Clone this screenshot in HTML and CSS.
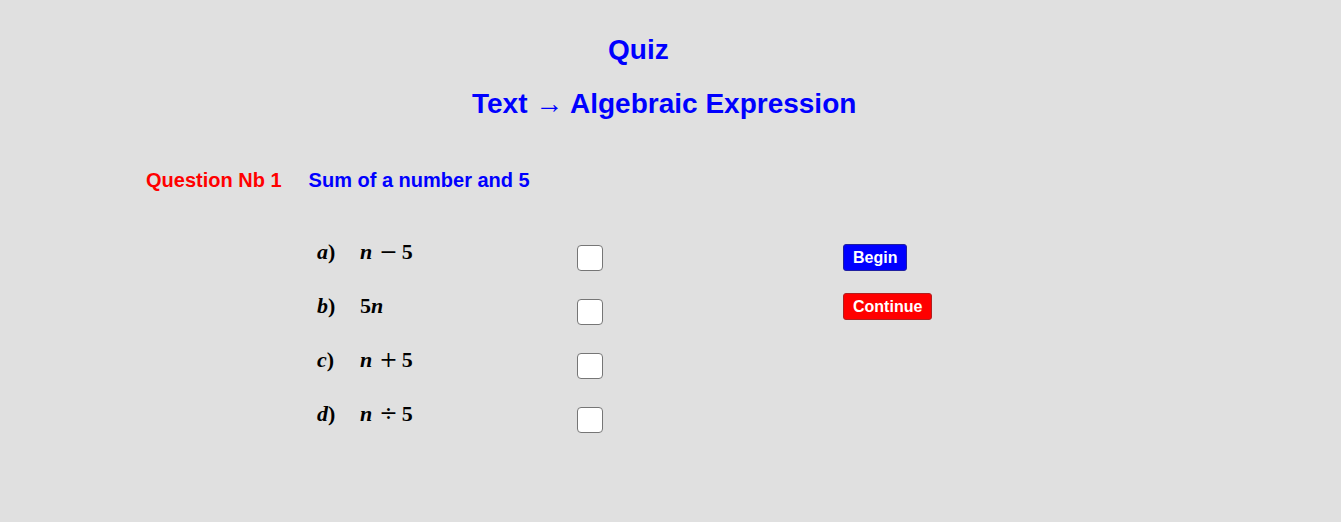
FILE: index.html
```html
<!DOCTYPE html>
<html lang="en">
<head>
    <meta charset="UTF-8">
    <meta name="viewport" content="width=device-width, initial-scale=1.0">
    <title>Quiz</title>
    <link rel="stylesheet" href="styles.css">
</head>
<body>
    <div class="applet">
        <div class="title1">Quiz</div>
        <div class="title2">Text &rarr; Algebraic Expression</div>
        <div class="question">
            <span class="qnb">Question Nb 1</span>
            <span class="qtext">Sum of a number and 5</span>
        </div>
        <div class="quiz">
            <ul class="options">
                <li>
                    <span class="math"><span class="lbl"><i>a</i>)</span><i>n</i><span class="op">&minus;</span>5</span>
                    <span class="box"></span>
                </li>
                <li>
                    <span class="math"><span class="lbl"><i>b</i>)</span>5<i>n</i></span>
                    <span class="box"></span>
                </li>
                <li>
                    <span class="math"><span class="lbl"><i>c</i>)</span><i>n</i><span class="op">+</span>5</span>
                    <span class="box"></span>
                </li>
                <li>
                    <span class="math"><span class="lbl"><i>d</i>)</span><i>n</i><span class="op">&divide;</span>5</span>
                    <span class="box"></span>
                </li>
            </ul>
            <div class="buttons">
                <div class="btn begin">Begin</div>
                <div class="btn continue">Continue</div>
            </div>
        </div>
    </div>
</body>
</html>
```

FILE: styles.css
```css
*{
    margin: 0px;
    padding: 0px;
    list-style: none;
}
body{
    background-color: #e0e0e0;
    font-family: "Liberation Sans", Arial, sans-serif;
    font-weight: bold;
    overflow: hidden;
}
.applet{
    height: 522px;
}
.title1{
    padding-top: 34px;
    margin-left: 608px;
    font-size: 28px;
    line-height: 32px;
    color: #0000ff;
}
.title2{
    margin-top: 22px;
    margin-left: 472px;
    font-size: 28px;
    line-height: 32px;
    color: #0000ff;
}
.question{
    display: flex;
    gap: 27px;
    margin-top: 49px;
    padding-left: 146px;
    font-size: 20px;
    line-height: 23px;
}
.qnb{
    color: #ff0000;
}
.qtext{
    color: #0000ff;
}
.quiz{
    display: flex;
    margin-top: 39px;
    padding-left: 317px;
}
.options li{
    display: flex;
    align-items: center;
    height: 54px;
}
.math{
    width: 260px;
    margin-bottom: 14px;
    font-family: "Liberation Serif", "Times New Roman", serif;
    font-size: 22px;
    line-height: 25px;
    color: #000;
}
.math i{
    font-style: italic;
}
.lbl{
    display: inline-block;
    width: 43px;
}
.op{
    margin: 0 4px 0 7px;
    font-family: "DejaVu Serif", serif;
    font-weight: normal;
}
.box{
    width: 24px;
    height: 24px;
    border: 1px solid #767676;
    border-radius: 4px;
    background-color: #fff;
}
.buttons{
    display: flex;
    flex-direction: column;
    align-items: flex-start;
    gap: 22px;
    margin-top: 13px;
    margin-left: 240px;
}
.btn{
    height: 25px;
    padding: 0 9px;
    border: 1px solid;
    border-radius: 3px;
    font-size: 16px;
    line-height: 25px;
    color: #fff;
}
.begin{
    background-color: #0000ff;
    border-color: #2020a0;
}
.continue{
    background-color: #ff0000;
    border-color: #b02020;
}
```
